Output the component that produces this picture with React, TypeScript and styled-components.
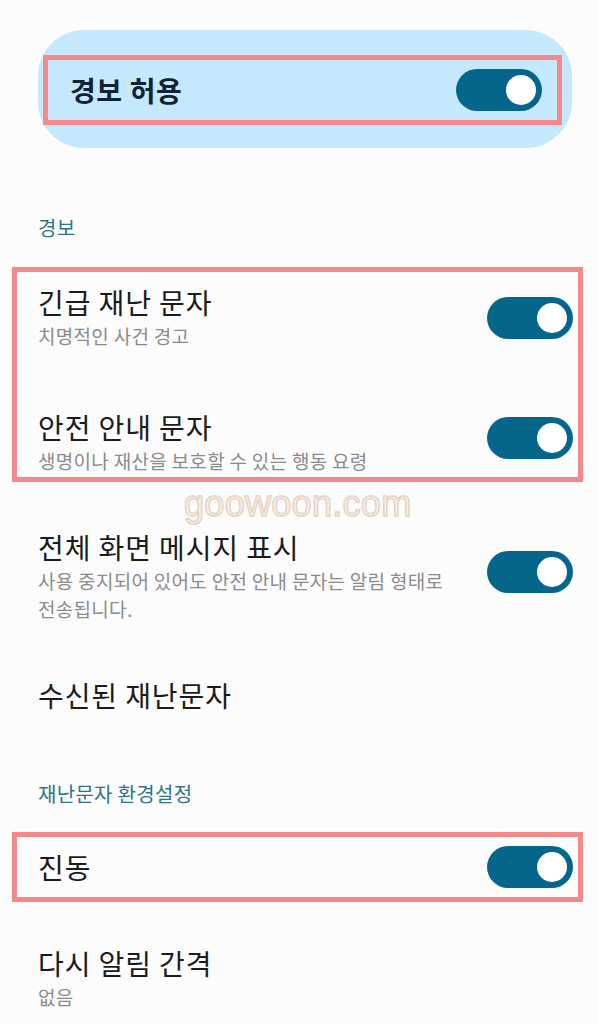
import React from "react";
import styled, { createGlobalStyle } from "styled-components";

const Global = createGlobalStyle`
  html, body { margin: 0; padding: 0; background: #fcfcfd; }
  body { font-family: "Noto Sans CJK KR", "Noto Sans", sans-serif; -webkit-font-smoothing: antialiased; }
  * { box-sizing: border-box; }
`;

const Page = styled.div`
  position: relative;
  width: 598px;
  height: 1024px;
  overflow: hidden;
  padding-top: 30px;
  background: #fcfcfd;
`;

const MasterCard = styled.div`
  margin: 0 26px 0 38px;
  height: 118px;
  padding: 25px 10px 23px 5px;
  background: #c5e8fc;
  border-radius: 46px;
`;

const Highlight = styled.div<{ $mx?: string; $mt?: number }>`
  border: 5px solid #f38a89;
  margin: ${(p) => p.$mt ?? 0}px ${(p) => p.$mx ?? "0 0 0"};
`;

const MasterRow = styled.div`
  height: 60px;
  display: flex;
  align-items: center;
  justify-content: space-between;
  padding: 0 15px 0 22px;
`;

const MasterTitle = styled.div`
  font-size: 28px;
  font-weight: 700;
  color: #0f2335;
  letter-spacing: 0.6px;
`;

const Section = styled.div<{ $mt: number }>`
  margin-top: ${(p) => p.$mt}px;
  padding-left: 38px;
  font-size: 20px;
  line-height: 26px;
  color: #2c7486;
  letter-spacing: 0.3px;
`;

const BoxRows = styled.div<{ $pt: number; $pb: number; $gap: number }>`
  display: flex;
  flex-direction: column;
  gap: ${(p) => p.$gap}px;
  padding: ${(p) => p.$pt}px 5px ${(p) => p.$pb}px 21px;
`;

const Row = styled.div<{ $mt?: number; $h?: number; $top?: boolean }>`
  display: flex;
  align-items: ${(p) => (p.$top ? "flex-start" : "center")};
  justify-content: space-between;
  margin-top: ${(p) => p.$mt ?? 0}px;
  ${(p) => (p.$h ? `height: ${p.$h}px;` : "")}
`;

const BoxedRow = styled(Row)`
  padding: 0 5px 0 21px;
`;

const Plain = styled.div`
  padding: 0 25px 0 38px;
`;

const Texts = styled.div`
  display: flex;
  flex-direction: column;
`;

const Title = styled.div`
  font-size: 28px;
  line-height: 34px;
  color: #1b1b1b;
  letter-spacing: 0.9px;
`;

const Sub = styled.div`
  margin-top: 3px;
  font-size: 19px;
  line-height: 28px;
  color: #8b8b8b;
  letter-spacing: 0.3px;
`;

const Track = styled.div<{ $mt?: number }>`
  position: relative;
  flex: none;
  width: 86px;
  height: 42px;
  margin-top: ${(p) => p.$mt ?? 0}px;
  border-radius: 21px;
  background: #05668c;
`;

const Knob = styled.div`
  position: absolute;
  top: 6px;
  right: 6px;
  width: 30px;
  height: 30px;
  border-radius: 50%;
  background: #ffffff;
`;

const Watermark = styled.div`
  position: absolute;
  left: 184px;
  top: 486px;
  font-family: "Liberation Sans", "DejaVu Sans", sans-serif;
  font-size: 36px;
  line-height: 36px;
  color: #fbf2ea;
  -webkit-text-stroke: 1.5px #e6d3c3;
  letter-spacing: 0.3px;
  pointer-events: none;
`;

const Toggle = ({ mt }: { mt?: number }) => (
  <Track $mt={mt}>
    <Knob />
  </Track>
);

export default function App() {
  return (
    <>
      <Global />
      <Page>
        <MasterCard>
          <Highlight>
            <MasterRow>
              <MasterTitle>경보 허용</MasterTitle>
              <Toggle />
            </MasterRow>
          </Highlight>
        </MasterCard>

        <Section $mt={67}>경보</Section>

        <Highlight $mt={26} $mx="15px 0 12px">
          <BoxRows $pt={13} $pb={2} $gap={60}>
            <Row>
              <Texts>
                <Title>긴급 재난 문자</Title>
                <Sub>치명적인 사건 경고</Sub>
              </Texts>
              <Toggle />
            </Row>
            <Row $top>
              <Texts>
                <Title>안전 안내 문자</Title>
                <Sub>생명이나 재산을 보호할 수 있는 행동 요령</Sub>
              </Texts>
              <Toggle mt={7} />
            </Row>
          </BoxRows>
        </Highlight>

        <Plain>
          <Row $mt={48} $top>
            <Texts>
              <Title>전체 화면 메시지 표시</Title>
              <Sub>
                사용 중지되어 있어도 안전 안내 문자는 알림 형태로
                <br />
                전송됩니다.
              </Sub>
            </Texts>
            <Toggle mt={21} />
          </Row>
          <Row $mt={55}>
            <Title>수신된 재난문자</Title>
          </Row>
        </Plain>

        <Section $mt={69}>재난문자 환경설정</Section>

        <Highlight $mt={25} $mx="15px 0 12px">
          <BoxedRow $h={60}>
            <Title>진동</Title>
            <Toggle />
          </BoxedRow>
        </Highlight>

        <Plain>
          <Row $mt={44}>
            <Texts>
              <Title>다시 알림 간격</Title>
              <Sub>없음</Sub>
            </Texts>
          </Row>
        </Plain>

        <Watermark>goowoon.com</Watermark>
      </Page>
    </>
  );
}
